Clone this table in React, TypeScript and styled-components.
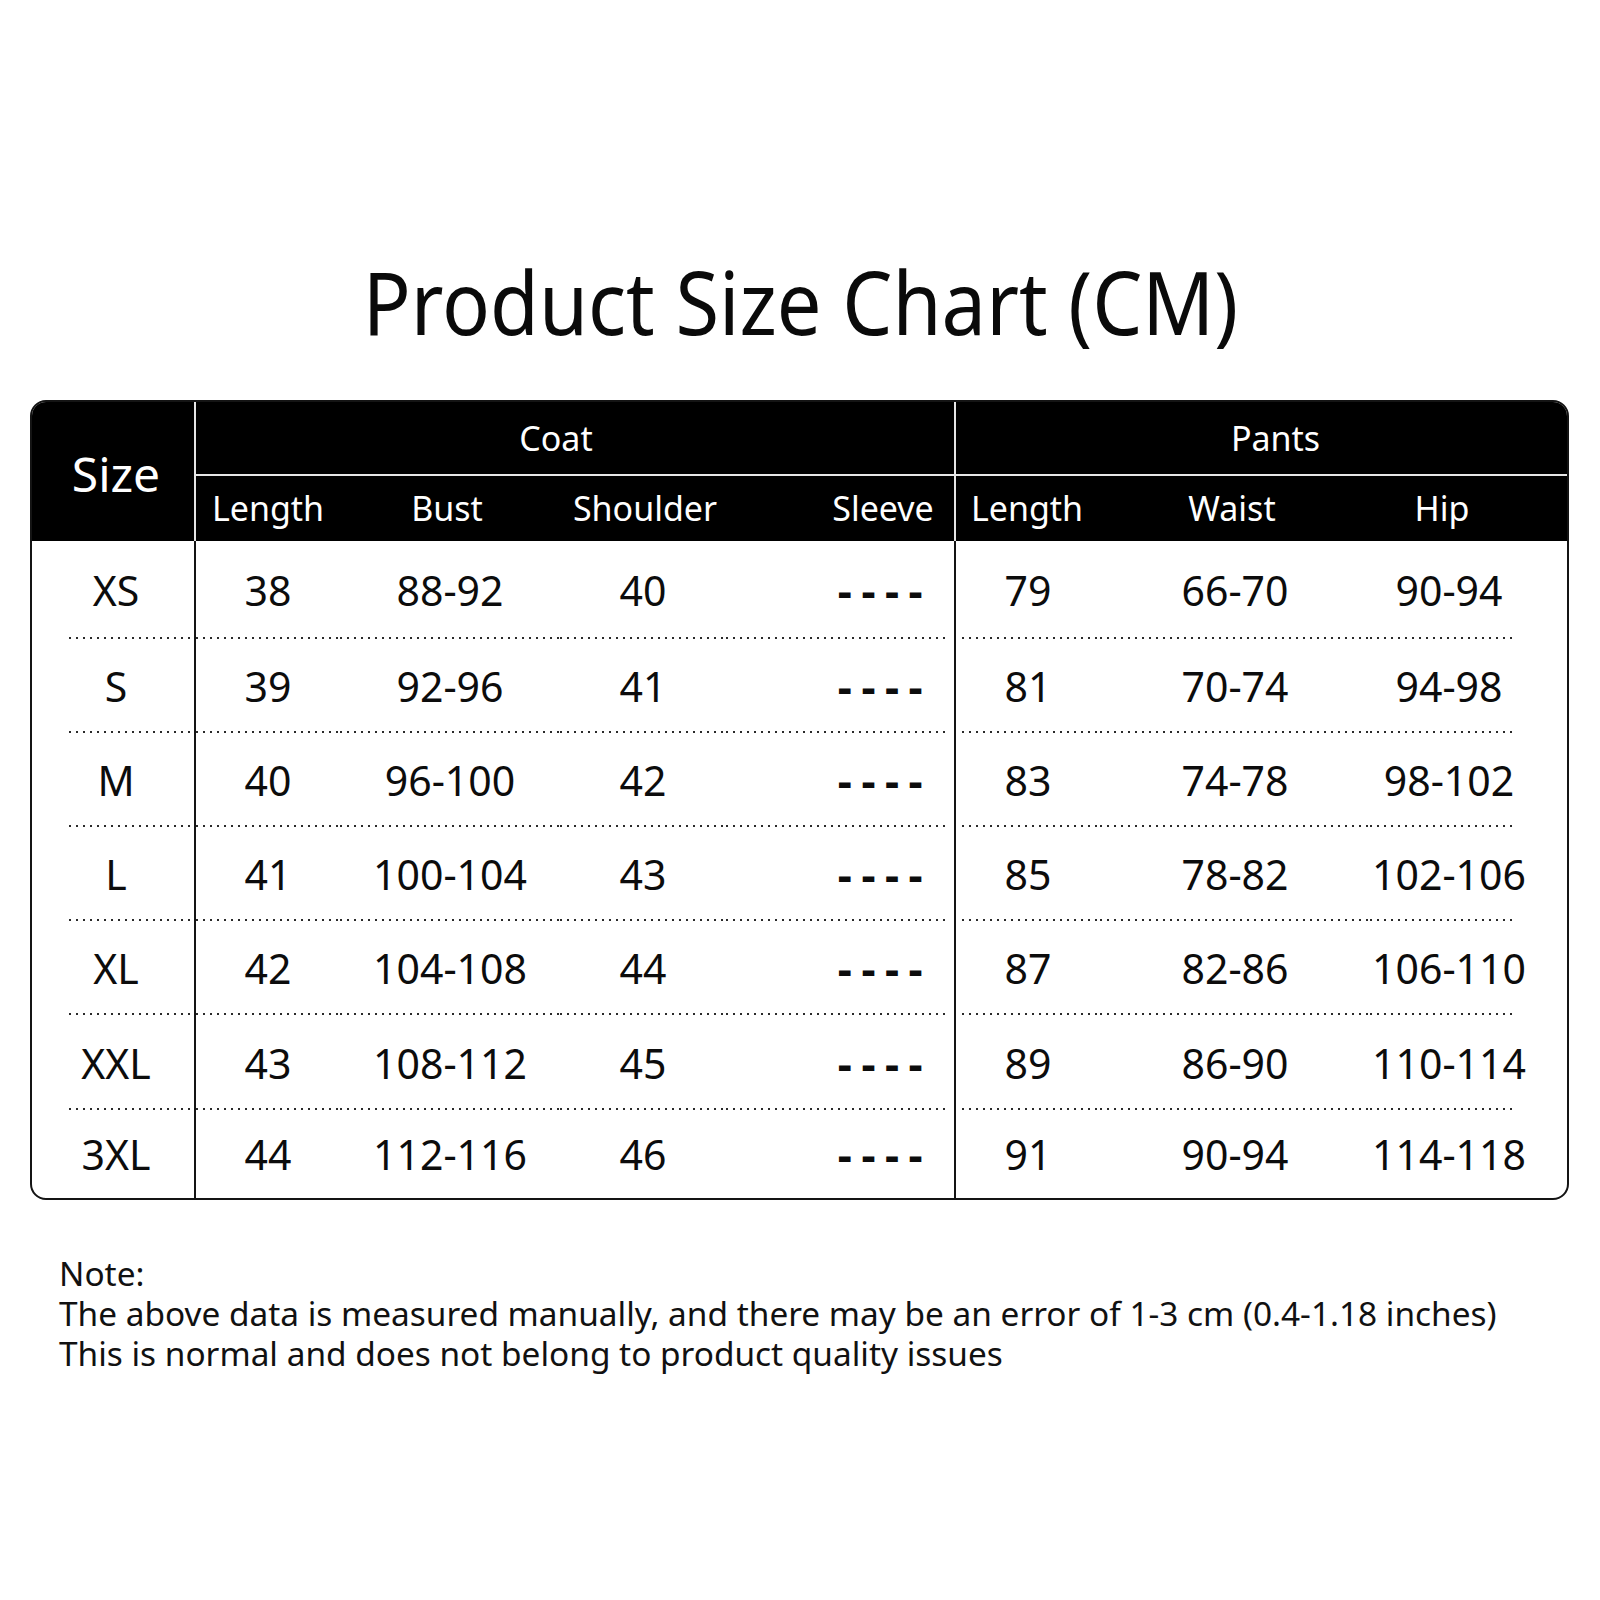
import React from "react";
import styled, { createGlobalStyle } from "styled-components";

const Global = createGlobalStyle`
  html, body { margin: 0; padding: 0; background: #ffffff; }
  body { font-family: "Noto Sans", "Open Sans", sans-serif; color: #111; }
`;

const Page = styled.div`
  width: 1600px;
  height: 1600px;
  box-sizing: border-box;
  padding: 249px 31px 0 30px;
  background: #fff;
`;

const TitleRow = styled.div`
  display: flex;
  justify-content: center;
  padding-left: 2px;
`;

const Title = styled.h1`
  margin: 0;
  font-family: "Noto Sans", sans-serif;
  font-weight: 400;
  font-size: 87px;
  line-height: 104px;
  color: #0a0a0a;
  white-space: nowrap;
  transform: scaleX(0.913);
`;

const Table = styled.div`
  margin-top: 47px;
  display: grid;
  grid-template-columns: 164px 144px 220px 166px 230px 144px 270px 197px;
  grid-template-rows: 74px 65px 98px 94px 94px 94px 94px 95px 88px;
  border: 2px solid #141414;
  border-radius: 16px;
  overflow: hidden;
  background: #fff;
`;

const SizeHead = styled.div`
  grid-row: 1 / span 2;
  background: #000;
  color: #fff;
  font-size: 48px;
  display: flex;
  align-items: center;
  justify-content: center;
  padding-top: 4px;
  padding-left: 6px;
  border-right: 2px solid #e6e6e6;
`;

const GroupHead = styled.div<{ $span: number; $shift: number; $divider?: boolean }>`
  grid-column: span ${(p) => p.$span};
  background: #000;
  color: #fff;
  font-size: 34px;
  display: flex;
  align-items: center;
  justify-content: center;
  padding-left: ${(p) => (p.$shift > 0 ? p.$shift : 0)}px;
  padding-right: ${(p) => (p.$shift < 0 ? -p.$shift : 0)}px;
  border-bottom: 2px solid #e6e6e6;
  border-right: ${(p) => (p.$divider ? "2px solid #e6e6e6" : "none")};
`;

const SubHead = styled.div<{ $padL?: number; $padR?: number; $divider?: boolean }>`
  background: #000;
  color: #fff;
  font-size: 34px;
  white-space: nowrap;
  display: flex;
  align-items: center;
  justify-content: center;
  padding-left: ${(p) => p.$padL ?? 0}px;
  padding-right: ${(p) => p.$padR ?? 0}px;
  padding-bottom: 2px;
  border-right: ${(p) => (p.$divider ? "2px solid #e6e6e6" : "none")};
`;

const Cell = styled.div<{
  $padL?: number;
  $padR?: number;
  $dotL?: number;
  $dotR?: number;
  $divider?: boolean;
  $last?: boolean;
  $dash?: boolean;
}>`
  display: flex;
  align-items: center;
  justify-content: center;
  white-space: nowrap;
  font-size: 41px;
  color: #0c0c0c;
  padding-left: ${(p) => p.$padL ?? 0}px;
  padding-right: ${(p) => p.$padR ?? 0}px;
  border-right: ${(p) => (p.$divider ? "2px solid #141414" : "none")};
  ${(p) => (p.$dash ? "letter-spacing: 9.5px; font-weight: 700; font-size: 44px;" : "")}
  ${(p) =>
    p.$last
      ? ""
      : `
    background-image: repeating-linear-gradient(to right, #2a2a2a 0 2px, transparent 2px 7px);
    background-repeat: no-repeat;
    background-size: calc(100% - ${(p.$dotL ?? 0) + (p.$dotR ?? 0)}px) 2px;
    background-position: ${p.$dotL ?? 0}px 100%;
  `}
`;

const Note = styled.div`
  margin-top: 53px;
  padding-left: 29px;
  font-size: 33.4px;
  line-height: 40px;
  color: #111;
  white-space: nowrap;
`;

const rows = [
  ["XS", "38", "88-92", "40", "79", "66-70", "90-94"],
  ["S", "39", "92-96", "41", "81", "70-74", "94-98"],
  ["M", "40", "96-100", "42", "83", "74-78", "98-102"],
  ["L", "41", "100-104", "43", "85", "78-82", "102-106"],
  ["XL", "42", "104-108", "44", "87", "82-86", "106-110"],
  ["XXL", "43", "108-112", "45", "89", "86-90", "110-114"],
  ["3XL", "44", "112-116", "46", "91", "90-94", "114-118"],
];

export default function App() {
  return (
    <>
      <Global />
      <Page>
        <TitleRow>
          <Title>Product Size Chart (CM)</Title>
        </TitleRow>
        <Table>
          <SizeHead>Size</SizeHead>
          <GroupHead $span={4} $shift={-38} $divider>
            Coat
          </GroupHead>
          <GroupHead $span={3} $shift={28}>
            Pants
          </GroupHead>
          <SubHead>Length</SubHead>
          <SubHead $padR={6}>Bust</SubHead>
          <SubHead $padL={4}>Shoulder</SubHead>
          <SubHead $padL={86} $divider>
            Sleeve
          </SubHead>
          <SubHead $padR={2}>Length</SubHead>
          <SubHead $padR={6}>Waist</SubHead>
          <SubHead $padR={53}>Hip</SubHead>
          {rows.map((r, i) => {
            const last = i === rows.length - 1;
            return (
              <React.Fragment key={r[0]}>
                <Cell $padL={6} $dotL={37} $divider $last={last}>
                  {r[0]}
                </Cell>
                <Cell $last={last}>{r[1]}</Cell>
                <Cell $last={last}>{r[2]}</Cell>
                <Cell $last={last}>{r[3]}</Cell>
                <Cell $padL={90} $dotR={4} $divider $last={last} $dash>
                  ----
                </Cell>
                <Cell $dotL={6} $last={last}>
                  {r[4]}
                </Cell>
                <Cell $last={last}>{r[5]}</Cell>
                <Cell $padL={11} $padR={50} $dotR={50} $last={last}>
                  {r[6]}
                </Cell>
              </React.Fragment>
            );
          })}
        </Table>
        <Note>
          Note:
          <br />
          The above data is measured manually, and there may be an error of 1-3 cm (0.4-1.18 inches)
          <br />
          This is normal and does not belong to product quality issues
        </Note>
      </Page>
    </>
  );
}
